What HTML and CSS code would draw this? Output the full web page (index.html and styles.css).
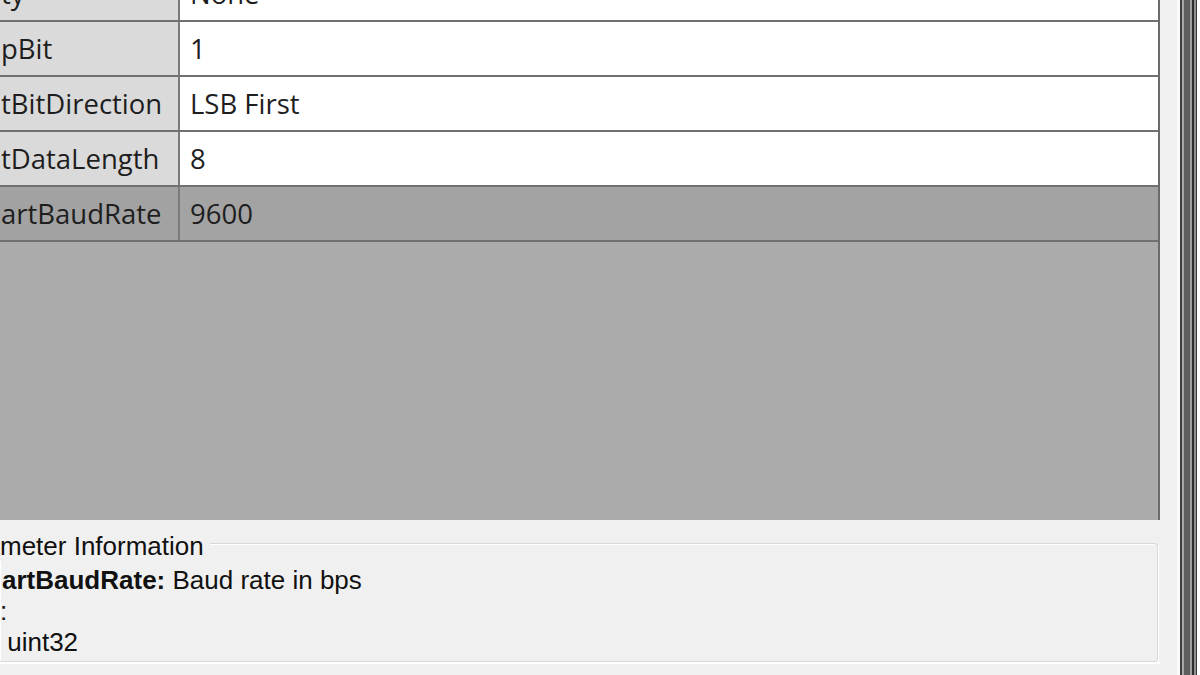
FILE: index.html
```html
<!DOCTYPE html>
<html>
<head>
<meta charset="utf-8">
<link rel="stylesheet" href="styles.css">
</head>
<body>
<div class="window">
  <div class="panel">
    <div class="grid">
      <div class="row first"><div class="name">ty</div><div class="value">None</div></div>
      <div class="row"><div class="name">pBit</div><div class="value">1</div></div>
      <div class="row"><div class="name">tBitDirection</div><div class="value">LSB First</div></div>
      <div class="row"><div class="name">tDataLength</div><div class="value">8</div></div>
      <div class="row selected"><div class="name">artBaudRate</div><div class="value">9600</div></div>
      <div class="empty"></div>
    </div>
    <div class="info">
      <div class="legend">meter Information</div>
      <div class="group">
        <div class="line first-line"><b>artBaudRate:</b> Baud rate in bps</div>
        <div class="line">:</div>
        <div class="line">&nbsp;uint32</div>
      </div>
    </div>
    <div class="footer"></div>
  </div>
  <div class="gutter"></div>
  <div class="splitter">
    <div class="stripe s1"></div>
    <div class="stripe s2"></div>
    <div class="stripe s3"></div>
    <div class="stripe s4"></div>
    <div class="stripe s5"></div>
    <div class="stripe s6"></div>
    <div class="stripe s7"></div>
  </div>
  <div class="edge"></div>
</div>
</body>
</html>
```
FILE: styles.css
```css
html, body {
  margin: 0;
  padding: 0;
  width: 1200px;
  height: 675px;
  overflow: hidden;
  background: #f0f0f0;
}
.window {
  display: flex;
  width: 1200px;
  height: 675px;
}
.panel {
  width: 1160px;
  flex: none;
  display: flex;
  flex-direction: column;
}
.grid {
  height: 520px;
  flex: none;
  background: #ababab;
  border-right: 2px solid #6b6b6b;
  display: flex;
  flex-direction: column;
  overflow: hidden;
  box-sizing: border-box;
}
.row {
  display: flex;
  height: 55px;
  flex: none;
  box-sizing: border-box;
  border-bottom: 2px solid #707070;
  font-family: "Open Sans", "Noto Sans", sans-serif;
  font-size: 27.5px;
  color: #1e1e1e;
}
.row.first {
  margin-top: -33px;
}
.name {
  width: 180px;
  flex: none;
  background: #dadada;
  border-right: 2px solid #7a7a7a;
  display: flex;
  align-items: center;
  white-space: nowrap;
  overflow: hidden;
  padding-left: 1px;
  box-sizing: border-box;
}
.value {
  flex: 1;
  background: #ffffff;
  display: flex;
  align-items: center;
  padding-left: 10px;
}
.row.selected .name { background: #a2a2a2; }
.row.selected .value { background: #a3a3a3; }
.empty {
  flex: 1;
  background: #ababab;
}
.info {
  height: 142px;
  flex: none;
  position: relative;
  font-family: "Liberation Sans", Arial, sans-serif;
  font-size: 26px;
  color: #111;
  padding-top: 23px;
  box-sizing: border-box;
}
.legend {
  position: absolute;
  left: 0;
  top: 11px;
  background: #f0f0f0;
  padding-right: 6px;
  line-height: 30px;
}
.group {
  height: 119px;
  box-sizing: border-box;
  border: 1px solid #d8d8d8;
  box-shadow: inset 1px 1px 0 #ffffff, 1px 1px 0 #ffffff;
  border-left: none;
  border-radius: 0 4px 4px 0;
  margin-right: 2px;
  padding-top: 21px;
}
.line {
  line-height: 31px;
  white-space: nowrap;
}
.first-line { padding-left: 2px; }
.line b { font-weight: bold; }
.footer {
  flex: 1;
  border-top: 2px solid #ffffff;
}
.gutter {
  width: 20px;
  flex: none;
  box-sizing: border-box;
  background: #f0f0f0;
  border-right: 3px solid #fbfbfb;
}
.splitter {
  width: 17px;
  flex: none;
  display: flex;
}
.stripe { flex: none; height: 100%; }
.s1 { width: 2px; background: #404040; }
.s2 { width: 2px; background: #a8a8a8; }
.s3 { width: 6px; background: #5e5e5e; }
.s4 { width: 2px; background: #a0a0a0; }
.s5 { width: 2px; background: #2e2e2e; }
.s6 { width: 2px; background: #909090; }
.s7 { width: 1px; background: #3a3a3a; }
.edge {
  width: 3px;
  flex: none;
  background: #ffffff;
}
```
